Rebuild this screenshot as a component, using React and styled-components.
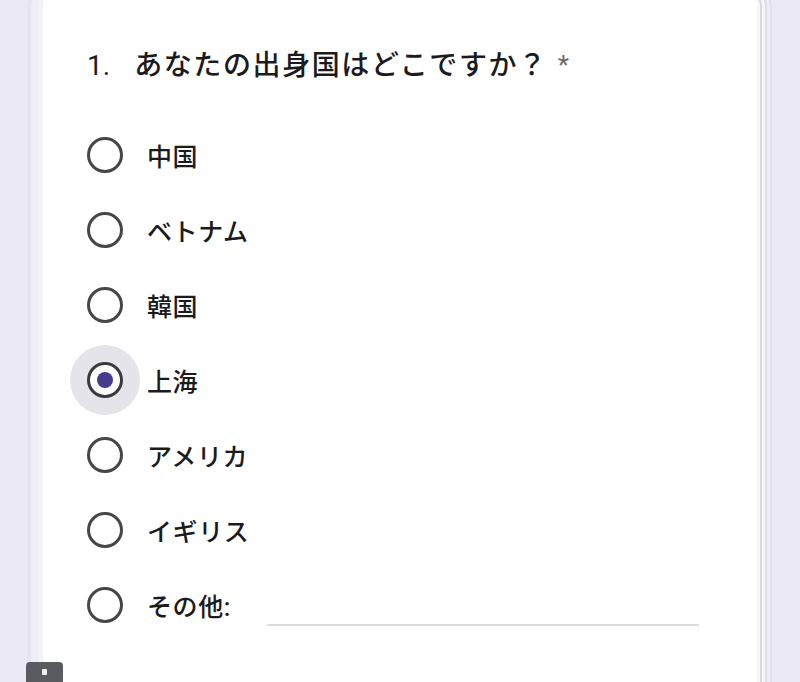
import React from "react";
import styled, { createGlobalStyle } from "styled-components";

const GlobalStyle = createGlobalStyle`
  html, body {
    margin: 0;
    padding: 0;
    height: 682px;
    overflow: hidden;
    background: #ebe9f4;
  }
  body {
    font-family: Roboto, "Noto Sans CJK JP", "Noto Sans", sans-serif;
    color: #1b1b1e;
  }
`;

const Page = styled.div`
  position: relative;
  height: 682px;
  padding-left: 43px;
  box-sizing: border-box;
`;

const Card = styled.section`
  width: 714px;
  height: 720px;
  margin-top: -8px;
  padding: 54px 0 0 44px;
  box-sizing: border-box;
  background: #ffffff;
  border-radius: 14px;
  box-shadow:
    3px 0 0 #f7f7fa,
    5px 0 0 #d9d8df,
    8px 0 0 #f6f5fa,
    10px 0 0 #dedde5,
    13px 0 0 #eeedf5,
    15px 0 0 #e2e1ea,
    -4px 0 0 #f4f3f9,
    -12px 0 0 #efeef6,
    -16px 0 0 #e6e5ef;
`;

const Title = styled.h2`
  margin: 0 0 32px;
  font-size: 28px;
  font-weight: 500;
  line-height: 39px;
  letter-spacing: 1.6px;
  display: flex;
  align-items: center;
`;

const Num = styled.span`
  margin-right: 24px;
  letter-spacing: 0;
  font-weight: 400;
`;

const Star = styled.span`
  margin-left: 10px;
  font-size: 26px;
  font-weight: 400;
  color: #6a6a70;
  letter-spacing: 0;
`;

const Options = styled.div`
  display: flex;
  flex-direction: column;
`;

const Row = styled.label`
  display: flex;
  align-items: center;
  height: 75px;
  gap: 24px;
  font-size: 25px;
  font-weight: 500;
  letter-spacing: 0.6px;
`;

const Radio = styled.span`
  position: relative;
  width: 36px;
  height: 36px;
  flex: none;
  box-sizing: border-box;
  border: 3px solid #46464a;
  border-radius: 50%;
  display: flex;
  align-items: center;
  justify-content: center;

  &::before {
    content: "";
    display: ${(p) => (p.$checked ? "block" : "none")};
    position: absolute;
    left: 50%;
    top: 50%;
    width: 70px;
    height: 70px;
    margin: -35px 0 0 -35px;
    border-radius: 50%;
    background: #e5e4ea;
    z-index: 0;
  }

  &::after {
    content: "";
    display: ${(p) => (p.$checked ? "block" : "none")};
    position: relative;
    width: 16px;
    height: 16px;
    border-radius: 50%;
    background: #463c8c;
  }
`;

const RadioFace = styled.span`
  position: absolute;
  inset: -3px;
  border-radius: 50%;
  border: 3px solid #3a3a3e;
  background: #ffffff;
  box-sizing: border-box;
  display: ${(p) => (p.$checked ? "block" : "none")};
`;

const Label = styled.span`
  color: #1b1b1e;
`;

const OtherLine = styled.span`
  flex: 1;
  max-width: 432px;
  height: 2px;
  margin: 40px 0 0 12px;
  background: #dcdcdf;
`;

const FloatBtn = styled.div`
  position: absolute;
  left: 26px;
  top: 670px;
  width: 37px;
  height: 20px;
  border-radius: 4px 4px 0 0;
  background: #5a5b60;
  display: flex;
  justify-content: center;
  padding-top: 7px;
  box-sizing: border-box;

  &::after {
    content: "";
    width: 5px;
    height: 6px;
    background: #f1f1f3;
    border-radius: 1px;
  }
`;

const options = ["中国", "ベトナム", "韓国", "上海", "アメリカ", "イギリス"];

export default function App() {
  return (
    <>
      <GlobalStyle />
      <Page>
        <Card>
          <Title>
            <Num>1.</Num>
            あなたの出身国はどこですか？
            <Star>*</Star>
          </Title>
          <Options>
            {options.map((o) => {
              const checked = o === "上海";
              return (
                <Row key={o}>
                  <Radio $checked={checked}>
                    <RadioFace $checked={checked} />
                  </Radio>
                  <Label>{o}</Label>
                </Row>
              );
            })}
            <Row>
              <Radio />
              <Label>その他:</Label>
              <OtherLine />
            </Row>
          </Options>
        </Card>
        <FloatBtn />
      </Page>
    </>
  );
}
